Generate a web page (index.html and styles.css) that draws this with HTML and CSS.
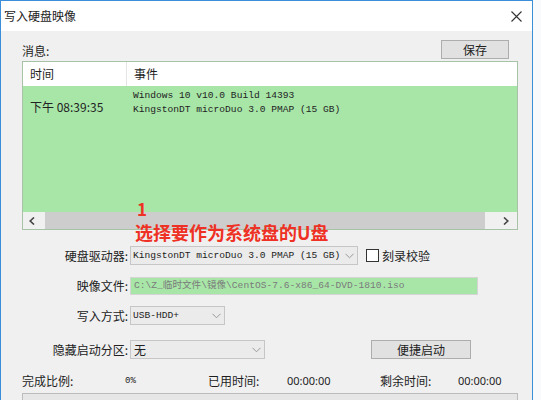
FILE: index.html
```html
<!DOCTYPE html>
<html lang="zh-CN">
<head>
<meta charset="utf-8">
<title>写入硬盘映像</title>
<link rel="stylesheet" href="styles.css">
</head>
<body>
<div class="window">
  <div class="titlebar">
    <span class="title">写入硬盘映像</span>
    <svg class="close" width="11" height="11" viewBox="0 0 11 11"><path d="M0.5 0.5 L10.5 10.5 M10.5 0.5 L0.5 10.5" stroke="#333" stroke-width="1.1" fill="none"/></svg>
  </div>
  <div class="body">
    <div class="msg-head">
      <span class="msg-label">消息:</span>
      <button class="btn btn-save">保存</button>
    </div>
    <div class="list">
      <div class="list-head">
        <div class="col1">时间</div>
        <div class="col2">事件</div>
      </div>
      <div class="list-rows">
        <div class="col1"><span class="time">下午 08:39:35</span></div>
        <div class="col2 mono">
          <div>Windows 10 v10.0 Build 14393</div>
          <div>KingstonDT microDuo 3.0 PMAP (15 GB)</div>
        </div>
      </div>
      <div class="hscroll">
        <svg class="arrow" width="6" height="8" viewBox="0 0 6 8"><path d="M5 0.5 L1.2 4 L5 7.5" stroke="#444" stroke-width="1.6" fill="none"/></svg>
        <div class="thumb"></div>
        <svg class="arrow" width="6" height="8" viewBox="0 0 6 8"><path d="M1 0.5 L4.8 4 L1 7.5" stroke="#444" stroke-width="1.6" fill="none"/></svg>
      </div>
    </div>

    <div class="form">
      <div class="row">
        <label class="lbl">硬盘驱动器:</label>
        <div class="combo combo-drive mono"><span class="val">KingstonDT microDuo 3.0 PMAP (15 GB)</span>
          <svg class="chev" width="9" height="6" viewBox="0 0 9 6"><path d="M0.5 0.8 L4.5 4.8 L8.5 0.8" stroke="#999" stroke-width="1" fill="none"/></svg>
        </div>
        <span class="check"></span><span class="check-lbl">刻录校验</span>
      </div>
      <div class="row">
        <label class="lbl">映像文件:</label>
        <div class="textbox mono">C:\Z_临时文件\镜像\CentOS-7.6-x86_64-DVD-1810.iso</div>
      </div>
      <div class="row">
        <label class="lbl">写入方式:</label>
        <div class="combo combo-mode mono"><span class="val">USB-HDD+</span>
          <svg class="chev" width="9" height="6" viewBox="0 0 9 6"><path d="M0.5 0.8 L4.5 4.8 L8.5 0.8" stroke="#999" stroke-width="1" fill="none"/></svg>
        </div>
      </div>
      <div class="row row-hidden">
        <label class="lbl">隐藏启动分区:</label>
        <div class="combo combo-hidden"><span class="val cjk">无</span>
          <svg class="chev" width="9" height="6" viewBox="0 0 9 6"><path d="M0.5 0.8 L4.5 4.8 L8.5 0.8" stroke="#999" stroke-width="1" fill="none"/></svg>
        </div>
        <button class="btn btn-quick">便捷启动</button>
      </div>
    </div>

    <div class="stats">
      <span>完成比例:</span>
      <span class="pct">0%</span>
      <span>已用时间:</span>
      <span class="tm">00:00:00</span>
      <span>剩余时间:</span>
      <span class="tm">00:00:00</span>
    </div>
    <div class="progress"></div>
  </div>

  <div class="note note-num">1</div>
  <div class="note note-text">选择要作为系统盘的U盘</div>
</div>
</body>
</html>
```
FILE: styles.css
```css
* { box-sizing: border-box; }
html, body { margin: 0; padding: 0; }
body {
  background: #f8fafb;
  font-family: "Noto Sans CJK SC", "Noto Sans", sans-serif;
  font-size: 12px;
  color: #1e1e1e;
}
.window {
  position: relative;
  width: 533px;
  height: 400px;
  border: 1px solid #3b8fd8;
  border-bottom: 0;
  background: #f0f0f0;
  overflow: hidden;
}
.titlebar {
  height: 30px;
  background: #ffffff;
  display: flex;
  align-items: center;
  justify-content: space-between;
  padding: 0 10px 0 3px;
}
.title { font-size: 12px; line-height: 16px; color: #222; }
.close { display: block; margin-top: 1px; }

.body { padding: 9px 14px 0 21px; }

.msg-head {
  display: flex;
  justify-content: space-between;
  align-items: center;
  height: 19px;
}
.msg-label { line-height: 16px; padding-top: 2px; }
.btn {
  font-family: "Noto Sans CJK SC", sans-serif;
  font-size: 12px;
  line-height: 15px;
  background: #e1e1e1;
  border: 1px solid #adadad;
  color: #222;
  padding: 0;
  margin: 0;
}
.btn-save { width: 68px; height: 19px; margin-right: 9px; }

.list {
  margin-top: 2px;
  height: 169px;
  border: 1px solid #a7c2a7;
  background: #fff;
  display: flex;
  flex-direction: column;
}
.list-head {
  height: 24px;
  display: flex;
  background: #fff;
}
.list-head .col1 {
  width: 104px;
  border-right: 1px solid #e4e4e4;
  padding-left: 7px;
  line-height: 24px;
}
.list-head .col2 { padding-left: 7px; line-height: 24px; }
.list-rows {
  height: 126px;
  background: #a8e6a8;
  display: flex;
}
.list-rows .col1 { width: 104px; padding-left: 7px; padding-top: 14px; line-height: 14px; }
.time { font-size: 12px; line-height: 14px; color: #222; }
.list-rows .col2 { padding-left: 6px; padding-top: 3px; line-height: 14px; color: #222; }
.mono {
  font-family: "Liberation Mono", "Noto Sans CJK SC", monospace;
  font-size: 9.6px;
  white-space: nowrap;
}
.hscroll {
  height: 17px;
  flex: none;
  background: #f0f0f0;
  display: flex;
  align-items: center;
  padding: 0 8px 0 6px;
  gap: 10px;
}
.arrow { display: block; flex: none; }
.thumb { flex: 1; height: 17px; background: #cdcdcd; margin-right: 8px; }

.form { margin-top: 16px; display: flex; flex-direction: column; gap: 11px; }
.row { display: flex; align-items: center; height: 19px; }
.row-hidden { margin-top: 4px; }
.lbl {
  width: 108px;
  flex: none;
  text-align: right;
  padding-right: 2px;
  line-height: 16px;
  color: #222;
}
.combo {
  flex: none;
  height: 19px;
  background: #ebebeb;
  border: 1px solid #c6c6c6;
  display: flex;
  align-items: center;
  padding: 0 3px 0 2px;
  color: #222;
}
.val { flex: 1; white-space: nowrap; line-height: 17px; min-width: 0; }
.chev { display: block; flex: none; }
.combo-drive { width: 228px; }
.combo-mode { width: 95px; }
.combo-hidden { width: 135px; padding-left: 3px; }
.cjk { font-family: "Noto Sans CJK SC", sans-serif; font-size: 12px; }
.check {
  flex: none;
  width: 13px;
  height: 13px;
  border: 1px solid #333;
  background: #fff;
  margin-left: 8px;
}
.check-lbl { margin-left: 3px; line-height: 16px; }
.textbox {
  flex: none;
  width: 348px;
  height: 18px;
  background: #a8e6a8;
  border: 1px solid #d4d4d4;
  color: #7a7a7a;
  padding-left: 3px;
  line-height: 16px;
}
.btn-quick { width: 100px; height: 19px; margin-left: 106px; }

.stats {
  margin-top: 14px;
  height: 16px;
  display: grid;
  grid-template-columns: 103px 83px 79px 93px 78px 1fr;
  align-items: center;
  line-height: 16px;
}
.pct { font-family: "Liberation Mono", monospace; font-size: 9px; }
.tm { font-family: "Noto Sans", sans-serif; font-size: 11px; }
.progress {
  margin-top: 4px;
  height: 20px;
  width: 496px;
  border: 1px solid #bcbcbc;
  background: #e6e6e6;
}

.note {
  position: absolute;
  color: #ee3124;
  font-weight: bold;
  font-family: "Noto Sans CJK SC", sans-serif;
  line-height: 1;
}
.note-num { left: 136px; top: 199px; font-size: 17px; }
.note-text { left: 134px; top: 222px; font-size: 18px; }
```
